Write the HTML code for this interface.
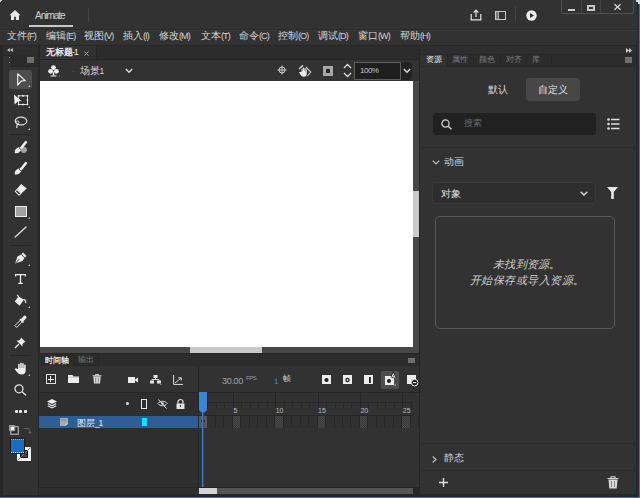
<!DOCTYPE html>
<html><head><meta charset="utf-8">
<style>
*{margin:0;padding:0;box-sizing:border-box}
html,body{width:640px;height:498px;overflow:hidden;background:#323232;font-family:"Liberation Sans",sans-serif;color:#d4d4d4;position:relative}
.a{position:absolute}
.t{position:absolute;white-space:nowrap;line-height:1}
.m{position:absolute;white-space:nowrap;line-height:1;font-size:10px;top:31px;color:#d8d8d8}
.m i{font-style:normal;font-size:9px;letter-spacing:-0.9px}
svg{position:absolute;overflow:visible}
.tri{position:absolute;width:0;height:0;border-left:2px solid transparent;border-bottom:2px solid #bdbdbd;border-right:0;width:2px;height:2px}
.dv{left:10px;width:21px;height:1px;background:repeating-linear-gradient(90deg,#1f1f1f 0 1px,#2a2a2a 1px 2px)}
</style></head><body>
<!-- title bar -->
<div class="a" style="left:0;top:0;width:640px;height:29px;background:#323232"></div>
<div class="a" style="left:0;top:29px;width:640px;height:1px;background:#2b2b2b"></div>
<div class="a" style="left:0;top:30px;width:640px;height:1px;background:#3a3a3a"></div>
<!-- home icon -->
<svg style="left:9px;top:10px" width="12" height="10" viewBox="0 0 12 10"><path d="M6 0 L11.5 5.2 L10 5.2 L10 10 L6.9 10 L6.9 6.8 L5.1 6.8 L5.1 10 L2 10 L2 5.2 L0.5 5.2 Z" fill="#e6e6e6"/></svg>
<div class="t" style="left:35px;top:11px;font-size:10px;letter-spacing:-1px;color:#d0d0d0">Animate</div>
<div class="a" style="left:29px;top:25px;width:44px;height:2px;background:#c8c8c8"></div>
<div class="a" style="left:88px;top:8px;width:1px;height:14px;background:#444"></div>
<!-- share icon -->
<svg style="left:470px;top:9px" width="12" height="12" viewBox="0 0 12 12"><path d="M1.2 5 V10.8 H10.8 V5" fill="none" stroke="#e4e4e4" stroke-width="1.2"/><path d="M6 8 V1.2 M3.6 3.6 L6 1.2 L8.4 3.6" fill="none" stroke="#e4e4e4" stroke-width="1.2"/></svg>
<!-- panel icon -->
<svg style="left:495px;top:11px" width="11" height="9" viewBox="0 0 11 9"><rect x="0.5" y="0.5" width="10" height="8" fill="none" stroke="#c8c8c8" stroke-width="1"/><rect x="1" y="1" width="2" height="7" fill="#777"/><path d="M3.5 1 V8" stroke="#c8c8c8" stroke-width="0.8"/></svg>
<div class="a" style="left:515px;top:6px;width:1px;height:15px;background:#444"></div>
<!-- play -->
<svg style="left:526px;top:10px" width="11" height="11" viewBox="0 0 11 11"><circle cx="5.5" cy="5.5" r="5.2" fill="#ececec"/><path d="M4 3 L8 5.5 L4 8 Z" fill="#323232"/></svg>
<!-- window controls -->
<div class="a" style="left:561px;top:-2px;width:73px;height:16px;border:1px solid #505050;border-radius:2px"></div>
<div class="a" style="left:581px;top:0;width:1px;height:13px;background:#444"></div>
<div class="a" style="left:600px;top:0;width:1px;height:13px;background:#444"></div>
<div class="a" style="left:568px;top:8.5px;width:7px;height:2px;background:#d0d0d0"></div>
<div class="a" style="left:587px;top:5px;width:8px;height:6px;border:2px solid #c8c8c8"></div>
<svg style="left:614px;top:4px" width="7" height="6" viewBox="0 0 7 6"><path d="M0.5 0.3 L6.5 5.7 M6.5 0.3 L0.5 5.7" stroke="#d8d8d8" stroke-width="1.3"/></svg>
<!-- menu -->
<div class="m" style="left:7px">文件<i>(F)</i></div>
<div class="m" style="left:46px">编辑<i>(E)</i></div>
<div class="m" style="left:84px">视图<i>(V)</i></div>
<div class="m" style="left:123px">插入<i>(I)</i></div>
<div class="m" style="left:159px">修改<i>(M)</i></div>
<div class="m" style="left:201px">文本<i>(T)</i></div>
<div class="m" style="left:239px">命令<i>(C)</i></div>
<div class="m" style="left:278px">控制<i>(O)</i></div>
<div class="m" style="left:318px">调试<i>(D)</i></div>
<div class="m" style="left:358px">窗口<i>(W)</i></div>
<div class="m" style="left:400px">帮助<i>(H)</i></div>

<!-- left toolbar -->
<div class="a" style="left:0;top:45px;width:39px;height:453px;background:#262626"></div>
<div class="a" style="left:3px;top:45px;width:35px;height:450px;background:#323232"></div>
<div class="a" style="left:3px;top:45px;width:35px;height:10px;background:#2e2e2e"></div>
<div class="a" style="left:3px;top:55px;width:35px;height:1px;background:#262626"></div>
<svg style="left:7px;top:48px" width="6" height="4" viewBox="0 0 6 4"><path d="M3 0 L0 2 L3 4 Z M6 0 L3 2 L6 4 Z" fill="#bdbdbd"/></svg>
<div class="a" style="left:11px;top:55px;width:27px;height:12px;background:#2b2b2b;border-left:1px solid #262626;border-bottom:1px solid #262626"></div>
<div class="a" style="left:8.5px;top:56.5px;width:1.5px;height:1.5px;background:#5a86bb"></div>
<div class="a" style="left:8.5px;top:61.5px;width:1.5px;height:1.5px;background:#5a86bb"></div>
<div class="a" style="left:27px;top:57px;width:7px;height:6px;background:#6e6e6e;border-top:1px solid #7a7a7a"></div>
<div class="a" style="left:9px;top:70px;width:23px;height:19px;background:#4e4e4e;border-radius:3px"></div>
<!-- arrow -->
<svg style="left:17px;top:73px" width="9" height="13" viewBox="0 0 9 13"><path d="M0.7 0.8 L8.2 7.6 L4.3 8 L0.7 12.2 Z" fill="none" stroke="#ececec" stroke-width="1.2" stroke-linejoin="round"/></svg>
<div class="tri" style="left:28px;top:85px"></div>
<!-- free transform -->
<svg style="left:13px;top:94px" width="16" height="12" viewBox="0 0 16 12"><rect x="5.5" y="1.8" width="9" height="8.7" fill="none" stroke="#d8d8d8" stroke-width="1"/><g fill="#e8e8e8"><rect x="4.8" y="1" width="1.6" height="1.6"/><rect x="9.2" y="1" width="1.6" height="1.6"/><rect x="13.7" y="1" width="1.6" height="1.6"/><rect x="13.7" y="5.4" width="1.6" height="1.6"/><rect x="4.8" y="9.7" width="1.6" height="1.6"/><rect x="9.2" y="9.7" width="1.6" height="1.6"/><rect x="13.7" y="9.7" width="1.6" height="1.6"/></g><path d="M1 0.5 L8.5 7 L4.8 7.6 L1.6 10.6 Z" fill="#f0f0f0"/></svg>
<div class="tri" style="left:28px;top:106px"></div>
<!-- lasso -->
<svg style="left:14px;top:116px" width="14" height="13" viewBox="0 0 14 13"><ellipse cx="7" cy="5" rx="5.8" ry="3.8" fill="none" stroke="#dcdcdc" stroke-width="1.2"/><circle cx="3.5" cy="6.5" r="1.5" fill="none" stroke="#dcdcdc" stroke-width="1"/><path d="M3.5 8 L2.5 12" stroke="#dcdcdc" stroke-width="1.1"/></svg>
<div class="tri" style="left:28px;top:128px"></div>
<div class="a dv" style="top:134px"></div>
<!-- paint brush -->
<svg style="left:14px;top:141px" width="13" height="13" viewBox="0 0 13 13"><circle cx="9.8" cy="8.8" r="3.1" fill="#a0a0a0"/><path d="M11.8 1.2 L7.2 7" stroke="#ededed" stroke-width="2.6" stroke-linecap="round"/><ellipse cx="4" cy="9.3" rx="3.5" ry="2.3" transform="rotate(-40 4 9.3)" fill="#ededed"/><path d="M1 12 L3 10" stroke="#ededed" stroke-width="1.5"/><path d="M4.8 6.5 L7.6 9.2" stroke="#323232" stroke-width="0.9"/></svg>
<!-- brush -->
<svg style="left:14px;top:162px" width="13" height="13" viewBox="0 0 13 13"><path d="M11.8 1.2 L7.2 7" stroke="#ededed" stroke-width="2.6" stroke-linecap="round"/><ellipse cx="4" cy="9.5" rx="3.5" ry="2.3" transform="rotate(-40 4 9.5)" fill="#ededed"/><path d="M1 12.2 L3 10.2" stroke="#ededed" stroke-width="1.5"/><path d="M4.8 6.7 L7.6 9.4" stroke="#323232" stroke-width="0.9"/></svg>
<!-- eraser -->
<svg style="left:14px;top:183px" width="13" height="13" viewBox="0 0 13 13"><path d="M7.2 1 L12.7 5.6 L7.31 10.57 L2.79 6.11 Z" fill="#ededed"/><path d="M2.9 6.5 L7 10.4 L5 12.2 L1.3 8.3 Z" fill="#2a2a2a" stroke="#e6e6e6" stroke-width="1.1" stroke-linejoin="round"/></svg>
<!-- rectangle -->
<div class="a" style="left:15px;top:206px;width:12px;height:11px;background:#a2a2a2;border:1px solid #ececec"></div>
<div class="tri" style="left:28px;top:217px"></div>
<!-- line -->
<svg style="left:14px;top:226px" width="13" height="12" viewBox="0 0 13 12"><path d="M1.2 11 L12 1" stroke="#e0e0e0" stroke-width="1.3" stroke-linecap="round"/></svg>
<div class="a dv" style="top:245px"></div>
<!-- pen -->
<svg style="left:14px;top:252px" width="13" height="12" viewBox="0 0 13 12"><path d="M9 0.5 L12.5 4 L11 5.5 L7.5 2 Z" fill="#eeeeee"/><path d="M7 2.5 L10.5 6 L8.5 9 L1 11.5 L3.5 4.5 Z" fill="#eeeeee"/><path d="M1.5 11 L5.5 7" stroke="#323232" stroke-width="1"/></svg>
<div class="tri" style="left:28px;top:264px"></div>
<!-- text T -->
<svg style="left:15px;top:274px" width="11" height="10" viewBox="0 0 11 10"><path d="M0.6 2.6 V0.6 H10.4 V2.6 M5.5 0.6 V9.4 M3.3 9.4 H7.7" fill="none" stroke="#ededed" stroke-width="1.3"/></svg>
<!-- bucket -->
<svg style="left:14px;top:294px" width="13" height="13" viewBox="0 0 13 13"><path d="M4.4 2.4 L10 5.6 L5.6 11.7 L0.8 7.6 Z" fill="#ededed"/><path d="M3.2 0.8 L5 3.3" stroke="#e0e0e0" stroke-width="1.2"/><path d="M10 5.4 C11.4 6 12 7.5 11.8 9.3" fill="none" stroke="#d8d8d8" stroke-width="1.2"/></svg>
<div class="tri" style="left:28px;top:306px"></div>
<!-- eyedropper -->
<svg style="left:14px;top:315px" width="13" height="13" viewBox="0 0 13 13"><path d="M0.9 10.6 L6.6 4.9 L8.4 6.7 L2.7 12.4 Z" fill="none" stroke="#e6e6e6" stroke-width="1" stroke-linejoin="round"/><path d="M6 4 L9.5 7.5" stroke="#ededed" stroke-width="1.6"/><path d="M8.6 4.6 L10.8 2.4" stroke="#ededed" stroke-width="3.4" stroke-linecap="round"/></svg>
<!-- pin -->
<svg style="left:14px;top:337px" width="12" height="12" viewBox="0 0 12 12"><path d="M7 0.5 L11.5 5 L10 5.5 L8.5 7 L8.5 9.5 L2.5 3.5 L5 3.5 L6.5 2 Z" fill="#eeeeee"/><path d="M5 7 L1 11" stroke="#eeeeee" stroke-width="1.2"/></svg>
<div class="a dv" style="top:355px"></div>
<!-- hand -->
<svg style="left:14px;top:362px" width="13" height="13" viewBox="0 0 11 13" preserveAspectRatio="none"><path d="M3.5 7 L3.5 2.2 C3.5 1.5 4.8 1.5 4.8 2.2 L4.8 6 L5.2 6 L5.2 1 C5.2 0.3 6.5 0.3 6.5 1 L6.5 6 L6.9 6 L6.9 1.5 C6.9 0.8 8.2 0.8 8.2 1.5 L8.2 6.2 L8.6 6.2 L8.6 3 C8.6 2.3 9.9 2.3 9.9 3 L9.9 8.5 C9.9 11 8.5 12.5 6.5 12.5 C4.5 12.5 3.5 11.5 2.5 10 L0.8 7.5 C0.3 6.8 1.2 6 2 6.6 Z" fill="#eeeeee"/></svg>
<div class="tri" style="left:28px;top:374px"></div>
<!-- zoom -->
<svg style="left:14px;top:384px" width="13" height="12" viewBox="0 0 13 12"><circle cx="5" cy="4.8" r="4" fill="none" stroke="#e0e0e0" stroke-width="1.3"/><path d="M8 7.8 L12 11.2" stroke="#e0e0e0" stroke-width="1.5"/></svg>
<!-- dots -->
<div class="a" style="left:15px;top:410px;width:3px;height:3px;background:#eee;border-radius:1px"></div>
<div class="a" style="left:19px;top:410px;width:3px;height:3px;background:#eee;border-radius:1px"></div>
<div class="a" style="left:24px;top:410px;width:3px;height:3px;background:#eee;border-radius:1px"></div>
<!-- default colors -->
<svg style="left:9px;top:425px" width="10" height="10" viewBox="0 0 10 10"><rect x="1.8" y="1.8" width="7.4" height="7.4" fill="#262626" stroke="#cfcfcf" stroke-width="1"/><rect x="0.5" y="0.5" width="5.2" height="5.2" fill="none" stroke="#9a9a9a" stroke-width="1"/><rect x="2" y="2" width="3.2" height="3.2" fill="#ffffff"/></svg>
<svg style="left:23px;top:427px" width="8" height="7" viewBox="0 0 8 7"><path d="M0.5 1.5 H5 C6.5 1.5 7 3 7 6.5 M5.5 5 L7 6.5 L8 5" fill="none" stroke="#5e5e5e" stroke-width="1.1"/></svg>
<!-- stroke/fill swatches -->
<div class="a" style="left:17px;top:447px;width:14px;height:14px;background:#f4f4f4"></div>
<div class="a" style="left:20px;top:450px;width:8px;height:8px;background:#444;border:1px solid #111"></div>
<svg style="left:17px;top:447px" width="14" height="14" viewBox="0 0 14 14"><path d="M0.5 13.5 L13.5 0.5" stroke="#b8682c" stroke-width="1"/></svg>
<div class="a" style="left:10px;top:438px;width:15px;height:16px;background:#1c1c1c"></div>
<div class="a" style="left:11px;top:439px;width:13px;height:14px;background:#1c6cc0;border-bottom:1px dotted #e8e8e8;border-top:1px dotted #8fb3dc"></div>
<!-- doc area -->
<div class="a" style="left:38px;top:45px;width:382px;height:308px;background:#262626"></div>
<div class="a" style="left:40px;top:45px;width:379px;height:14px;background:#2c2c2c"></div>
<div class="a" style="left:40px;top:45px;width:56px;height:14px;background:#323232"></div>
<div class="a" style="left:96px;top:45px;width:1px;height:14px;background:#262626"></div>
<div class="t" style="left:46px;top:48px;font-size:8.5px;font-weight:bold;color:#f0f0f0">无标题<span style="font-weight:normal;font-size:9px;letter-spacing:-1.2px;margin-left:-1px">-1</span></div>
<svg style="left:84px;top:51px" width="5" height="5" viewBox="0 0 5 5"><path d="M0.3 0.3 L4.7 4.7 M4.7 0.3 L0.3 4.7" stroke="#a8a8a8" stroke-width="0.9"/></svg>
<div class="a" style="left:40px;top:59px;width:379px;height:1px;background:#262626"></div>
<div class="a" style="left:40px;top:60px;width:379px;height:21px;background:#323232"></div>
<!-- club icon -->
<svg style="left:48px;top:65px" width="13" height="12" viewBox="0 0 13 12"><circle cx="5.5" cy="2.6" r="2.4" fill="#f0f0f0"/><circle cx="2.6" cy="6.3" r="2.4" fill="#f0f0f0"/><circle cx="8.4" cy="6.3" r="2.4" fill="#f0f0f0"/><path d="M5.5 5 L6.5 10.5 L4.5 10.5 Z" fill="#f0f0f0"/><path d="M2.5 11 H8.5" stroke="#f0f0f0" stroke-width="1"/><rect x="11" y="10.5" width="1" height="1" fill="#9a9a9a"/></svg>
<div class="a" style="left:73px;top:71px;width:1px;height:1px;background:#555"></div>
<div class="t" style="left:80px;top:66px;font-size:9.5px;color:#d8d8d8">场景<span style="font-size:8.5px;margin-left:-0.5px">1</span></div>
<svg style="left:125px;top:68px" width="8" height="6" viewBox="0 0 8 6"><path d="M0.8 1 L4 4.3 L7.2 1" fill="none" stroke="#dcdcdc" stroke-width="1.4"/></svg>
<!-- crosshair -->
<svg style="left:277px;top:65px" width="11" height="11" viewBox="0 0 11 11"><circle cx="5" cy="5" r="3" fill="none" stroke="#cfcfcf" stroke-width="1"/><path d="M5 0.5 V9.5 M0.5 5 H9.5" stroke="#cfcfcf" stroke-width="1"/></svg>
<!-- rotate hand -->
<svg style="left:298px;top:64px" width="14" height="13" viewBox="0 0 14 13"><path d="M1.5 4.5 L4.5 1.8" stroke="#d0d0d0" stroke-width="1.6" stroke-linecap="round"/><path d="M7.8 3 L12.8 8 L9.5 11.8" fill="none" stroke="#c8c8c8" stroke-width="1.1"/><path d="M3.5 8 L3.5 5 C3.5 4.3 4.6 4.3 4.6 5 L4.6 7 L5 7 L5 4 C5 3.3 6.1 3.3 6.1 4 L6.1 7 L6.4 7 L6.4 4.5 C6.4 3.8 7.5 3.8 7.5 4.5 L7.5 7.5 L7.8 7.5 L7.8 6 C7.8 5.4 8.8 5.4 8.8 6 L8.8 9.5 C8.8 11.5 7.8 12.8 6 12.8 C4.5 12.8 3.5 12 2.7 11 L1.2 8.8 C0.8 8.2 1.6 7.6 2.2 8.1 Z" fill="#e8e8e8"/></svg>
<!-- clip -->
<div class="a" style="left:323px;top:66px;width:10px;height:10px;border:3px solid #a8a8a8;background:#2a2a2a"></div>
<!-- up/down -->
<svg style="left:343px;top:63px" width="9" height="15" viewBox="0 0 9 15"><path d="M1 5 L4.5 1.5 L8 5 M1 10 L4.5 13.5 L8 10" fill="none" stroke="#dcdcdc" stroke-width="1.3"/></svg>
<div class="a" style="left:354px;top:62px;width:58px;height:18px;background:#222222;border-radius:0 4px 4px 0"></div>
<div class="a" style="left:354px;top:62px;width:47px;height:18px;background:#1e1e1e;border:1px solid #5c5c5c"></div>
<div class="t" style="left:360px;top:67px;font-size:8px;letter-spacing:-0.5px;color:#c8c8c8">100%</div>
<svg style="left:403px;top:68px" width="8" height="6" viewBox="0 0 8 6"><path d="M0.8 1 L4 4.3 L7.2 1" fill="none" stroke="#dcdcdc" stroke-width="1.4"/></svg>
<div class="a" style="left:40px;top:81px;width:373px;height:266px;background:#ffffff"></div>
<div class="a" style="left:413px;top:81px;width:6px;height:272px;background:#474747"></div>
<div class="a" style="left:40px;top:347px;width:373px;height:6px;background:#474747"></div>
<div class="a" style="left:190px;top:347px;width:72px;height:6px;background:#cacaca"></div>
<div class="a" style="left:413px;top:191px;width:6px;height:46px;background:#cacaca"></div>
<!-- timeline -->
<div class="a" style="left:38px;top:353px;width:382px;height:145px;background:#262626"></div>
<div class="a" style="left:39px;top:354px;width:380px;height:12px;background:#2c2c2c"></div>
<div class="t" style="left:45px;top:356.5px;font-size:7.6px;font-weight:bold;color:#e8e8e8">时间轴</div>
<div class="a" style="left:73px;top:354px;width:26px;height:12px;border:1px solid #262626;border-top:0;background:#2b2b2b"></div>
<div class="t" style="left:78px;top:356px;font-size:8px;color:#7a7a7a">输出</div>
<div class="a" style="left:408px;top:358px;width:7px;height:5px;background:#6e6e6e;border-top:1px solid #7a7a7a"></div>
<div class="a" style="left:39px;top:366px;width:380px;height:26px;background:#323232"></div>
<!-- new layer -->
<div class="a" style="left:46px;top:374px;width:10px;height:10px;border:1.2px solid #e0e0e0"></div>
<div class="a" style="left:50px;top:376px;width:1px;height:6px;background:#f0f0f0"></div><div class="a" style="left:48px;top:378.5px;width:6px;height:1px;background:#f0f0f0"></div>
<!-- folder -->
<svg style="left:68px;top:375px" width="12" height="9" viewBox="0 0 12 9"><path d="M0 0 H4.5 L5.5 1.5 H11 V8 H0 Z" fill="#ececec"/><path d="M0 2.2 H11" stroke="#9a9a9a" stroke-width="0.5"/></svg>
<!-- trash -->
<svg style="left:92px;top:374px" width="10" height="10" viewBox="0 0 10 10"><path d="M0.5 1.8 H9.5 M3.5 1.8 V0.6 H6.5 V1.8" fill="none" stroke="#dcdcdc" stroke-width="1"/><path d="M1.3 2.5 H8.7 L8 9.5 H2 Z" fill="#dcdcdc"/><path d="M3.7 3.5 V8.5 M6.3 3.5 V8.5" stroke="#6a6a6a" stroke-width="0.8"/></svg>
<!-- camera -->
<svg style="left:128px;top:377px" width="10" height="6" viewBox="0 0 10 6"><rect x="0" y="0" width="7" height="6" fill="#ececec"/><path d="M6.5 3 L10 0.5 V5.5 Z" fill="#ececec"/></svg>
<!-- parenting -->
<svg style="left:150px;top:375px" width="12" height="10" viewBox="0 0 12 10"><rect x="3.5" y="0" width="4" height="3" fill="#e4e4e4"/><rect x="0" y="5.5" width="4" height="3" fill="#e4e4e4"/><rect x="7" y="5.5" width="4" height="3" fill="#e4e4e4"/><path d="M5.5 3 V4.5 M2 5.5 V4.5 H9 V5.5" fill="none" stroke="#e4e4e4" stroke-width="0.9"/><rect x="10.5" y="9" width="1" height="1" fill="#bbb"/></svg>
<!-- graph -->
<svg style="left:173px;top:375px" width="10" height="10" viewBox="0 0 10 10"><path d="M0.6 0 V9.4 H10" fill="none" stroke="#dcdcdc" stroke-width="1"/><path d="M2 8 L8 3 M5.5 2.8 H8.3 V5.5" fill="none" stroke="#dcdcdc" stroke-width="1"/></svg>
<!-- fps -->
<div class="t" style="left:222px;top:377px;font-size:9px;letter-spacing:-0.3px;color:#9aa6b8">30.00</div>
<div class="t" style="left:246px;top:375px;font-size:6px;letter-spacing:-0.5px;color:#9a9a9a">FPS</div>
<div class="t" style="left:274px;top:377.5px;font-size:8px;color:#3d8ee6">1</div>
<div class="t" style="left:282.5px;top:374.5px;font-size:8px;color:#cfcfcf">帧</div>
<!-- frame controls -->
<svg style="left:322px;top:375px" width="9" height="9" viewBox="0 0 9 9"><rect width="9" height="9" fill="#ececec"/><circle cx="4.5" cy="5" r="2.1" fill="#1e1e1e"/></svg>
<svg style="left:343px;top:375px" width="9" height="9" viewBox="0 0 9 9"><rect width="9" height="9" fill="#ececec"/><circle cx="4.5" cy="5" r="2.2" fill="#1e1e1e"/><circle cx="4.5" cy="5" r="0.9" fill="#ececec"/></svg>
<svg style="left:364px;top:375px" width="9" height="9" viewBox="0 0 9 9"><rect width="9" height="9" fill="#ececec"/><rect x="5" y="2" width="1.8" height="6" fill="#1e1e1e"/></svg>
<div class="a" style="left:381px;top:371px;width:18px;height:18px;background:#4e4e4e;border-radius:2px"></div>
<svg style="left:385px;top:373px" width="11" height="13" viewBox="0 0 11 13"><rect x="0" y="3" width="9" height="9" fill="#ececec"/><circle cx="4" cy="8" r="2" fill="#1e1e1e"/><path d="M6.5 5 L8.3 0.6 L10.1 5 M7.2 3.4 H9.4" fill="none" stroke="#1e1e1e" stroke-width="2.2"/><path d="M6.5 5 L8.3 0.6 L10.1 5 M7.2 3.4 H9.4" fill="none" stroke="#ececec" stroke-width="0.9"/><rect x="9.5" y="11.5" width="1.2" height="1.2" fill="#ddd"/></svg>
<svg style="left:407px;top:375px" width="11" height="11" viewBox="0 0 11 11"><rect width="9" height="9" fill="#ececec"/><circle cx="7.6" cy="7.6" r="3.3" fill="#1e1e1e" stroke="#ececec" stroke-width="1"/><path d="M6 7.6 H9.2" stroke="#ececec" stroke-width="1.1"/></svg>
<div class="a" style="left:39px;top:392px;width:380px;height:1px;background:#262626"></div>
<!-- layers panel -->
<div class="a" style="left:39px;top:393px;width:159px;height:95px;background:#2e2e2e"></div>
<div class="a" style="left:198px;top:366px;width:1px;height:122px;background:#262626"></div>
<div class="a" style="left:199px;top:393px;width:220px;height:95px;background:#323232"></div>
<svg style="left:47px;top:399px" width="10" height="10" viewBox="0 0 10 10"><path d="M5 0 L10 2.5 L5 5 L0 2.5 Z" fill="#ececec"/><path d="M0.8 4.6 L5 6.8 L9.2 4.6 M0.8 6.8 L5 9 L9.2 6.8" fill="none" stroke="#ececec" stroke-width="1.1"/></svg>
<div class="a" style="left:126px;top:402px;width:3px;height:3px;background:#e0e0e0;border-radius:50%"></div>
<div class="a" style="left:141px;top:399px;width:6px;height:10px;border:1.2px solid #e6e6e6"></div>
<svg style="left:157px;top:399px" width="11" height="10" viewBox="0 0 11 10"><path d="M0.8 4.5 C3 1.5 8 1.5 10.2 4.5 C8 7.5 3 7.5 0.8 4.5 Z" fill="none" stroke="#dcdcdc" stroke-width="1"/><circle cx="5.5" cy="4.5" r="1.3" fill="#dcdcdc"/><path d="M1.5 0.5 L9.5 9.5" stroke="#dcdcdc" stroke-width="1"/></svg>
<svg style="left:176px;top:399px" width="9" height="10" viewBox="0 0 9 10"><path d="M2 4.5 V3 A2.5 2.5 0 0 1 7 3 V4.5" fill="none" stroke="#e4e4e4" stroke-width="1.2"/><rect x="0.5" y="4.5" width="8" height="5.5" fill="#e4e4e4"/><rect x="4" y="6" width="1" height="2" fill="#323232"/></svg>
<!-- ruler upper row line -->
<div class="a" style="left:199px;top:402px;width:214px;height:1px;background:#262626"></div>
<div class="a" style="left:199px;top:415px;width:214px;height:1px;background:#262626"></div>
<!-- layer row -->
<div class="a" style="left:39px;top:416px;width:159px;height:12px;background:#2f5e96"></div>
<svg style="left:60px;top:418px" width="8" height="8" viewBox="0 0 8 8"><path d="M0 0 H8 V5.5 L5.5 8 H0 Z" fill="#a8a8a8"/><path d="M5.5 8 V5.5 H8 Z" fill="#e0e0e0"/><rect x="1.5" y="1.5" width="5" height="1" fill="#8a8a8a"/></svg>
<div class="t" style="left:77px;top:418.5px;font-size:8.5px;color:#e8eef6">图层<span style="letter-spacing:-1.2px">_1</span></div>
<div class="a" style="left:142px;top:418px;width:5px;height:8px;background:#00e8ff"></div>
<div class="a" style="left:199px;top:416px;width:214px;height:12px;background:#303030"></div>
<div class="a" style="left:206.47px;top:416px;width:1px;height:12px;background:#262626"></div>
<div class="a" style="left:199.00px;top:403px;width:1px;height:6px;background:#262626"></div>
<div class="a" style="left:214.94px;top:416px;width:1px;height:12px;background:#262626"></div>
<div class="a" style="left:207.47px;top:403px;width:1px;height:6px;background:#262626"></div>
<div class="a" style="left:223.41px;top:416px;width:1px;height:12px;background:#262626"></div>
<div class="a" style="left:215.94px;top:403px;width:1px;height:6px;background:#262626"></div>
<div class="a" style="left:231.88px;top:416px;width:1px;height:12px;background:#262626"></div>
<div class="a" style="left:224.41px;top:403px;width:1px;height:6px;background:#262626"></div>
<div class="a" style="left:232.88px;top:416px;width:7.47px;height:12px;background:repeating-conic-gradient(#4a4a4a 0 25%,#383838 0 50%) 0 0/2px 2px"></div>
<div class="a" style="left:240.35px;top:416px;width:1px;height:12px;background:#262626"></div>
<div class="a" style="left:232.88px;top:403px;width:1px;height:6px;background:#262626"></div>
<div class="a" style="left:232.88px;top:392px;width:1px;height:11px;background:#262626"></div>
<div class="t" style="left:233.38px;top:407px;font-size:7px;color:#bdbdbd">5</div>
<div class="a" style="left:248.82px;top:416px;width:1px;height:12px;background:#262626"></div>
<div class="a" style="left:241.35px;top:403px;width:1px;height:6px;background:#262626"></div>
<div class="a" style="left:257.29px;top:416px;width:1px;height:12px;background:#262626"></div>
<div class="a" style="left:249.82px;top:403px;width:1px;height:6px;background:#262626"></div>
<div class="a" style="left:265.76px;top:416px;width:1px;height:12px;background:#262626"></div>
<div class="a" style="left:258.29px;top:403px;width:1px;height:6px;background:#262626"></div>
<div class="a" style="left:274.23px;top:416px;width:1px;height:12px;background:#262626"></div>
<div class="a" style="left:266.76px;top:403px;width:1px;height:6px;background:#262626"></div>
<div class="a" style="left:275.23px;top:416px;width:7.47px;height:12px;background:repeating-conic-gradient(#4a4a4a 0 25%,#383838 0 50%) 0 0/2px 2px"></div>
<div class="a" style="left:282.70px;top:416px;width:1px;height:12px;background:#262626"></div>
<div class="a" style="left:275.23px;top:403px;width:1px;height:6px;background:#262626"></div>
<div class="a" style="left:275.23px;top:392px;width:1px;height:11px;background:#262626"></div>
<div class="t" style="left:275.73px;top:407px;font-size:7px;color:#bdbdbd">10</div>
<div class="a" style="left:291.17px;top:416px;width:1px;height:12px;background:#262626"></div>
<div class="a" style="left:283.70px;top:403px;width:1px;height:6px;background:#262626"></div>
<div class="a" style="left:299.64px;top:416px;width:1px;height:12px;background:#262626"></div>
<div class="a" style="left:292.17px;top:403px;width:1px;height:6px;background:#262626"></div>
<div class="a" style="left:308.11px;top:416px;width:1px;height:12px;background:#262626"></div>
<div class="a" style="left:300.64px;top:403px;width:1px;height:6px;background:#262626"></div>
<div class="a" style="left:316.58px;top:416px;width:1px;height:12px;background:#262626"></div>
<div class="a" style="left:309.11px;top:403px;width:1px;height:6px;background:#262626"></div>
<div class="a" style="left:317.58px;top:416px;width:7.47px;height:12px;background:repeating-conic-gradient(#4a4a4a 0 25%,#383838 0 50%) 0 0/2px 2px"></div>
<div class="a" style="left:325.05px;top:416px;width:1px;height:12px;background:#262626"></div>
<div class="a" style="left:317.58px;top:403px;width:1px;height:6px;background:#262626"></div>
<div class="a" style="left:317.58px;top:392px;width:1px;height:11px;background:#262626"></div>
<div class="t" style="left:318.08px;top:407px;font-size:7px;color:#bdbdbd">15</div>
<div class="a" style="left:333.52px;top:416px;width:1px;height:12px;background:#262626"></div>
<div class="a" style="left:326.05px;top:403px;width:1px;height:6px;background:#262626"></div>
<div class="a" style="left:341.99px;top:416px;width:1px;height:12px;background:#262626"></div>
<div class="a" style="left:334.52px;top:403px;width:1px;height:6px;background:#262626"></div>
<div class="a" style="left:350.46px;top:416px;width:1px;height:12px;background:#262626"></div>
<div class="a" style="left:342.99px;top:403px;width:1px;height:6px;background:#262626"></div>
<div class="a" style="left:358.93px;top:416px;width:1px;height:12px;background:#262626"></div>
<div class="a" style="left:351.46px;top:403px;width:1px;height:6px;background:#262626"></div>
<div class="a" style="left:359.93px;top:416px;width:7.47px;height:12px;background:repeating-conic-gradient(#4a4a4a 0 25%,#383838 0 50%) 0 0/2px 2px"></div>
<div class="a" style="left:367.40px;top:416px;width:1px;height:12px;background:#262626"></div>
<div class="a" style="left:359.93px;top:403px;width:1px;height:6px;background:#262626"></div>
<div class="a" style="left:359.93px;top:392px;width:1px;height:11px;background:#262626"></div>
<div class="t" style="left:360.43px;top:407px;font-size:7px;color:#bdbdbd">20</div>
<div class="a" style="left:375.87px;top:416px;width:1px;height:12px;background:#262626"></div>
<div class="a" style="left:368.40px;top:403px;width:1px;height:6px;background:#262626"></div>
<div class="a" style="left:384.34px;top:416px;width:1px;height:12px;background:#262626"></div>
<div class="a" style="left:376.87px;top:403px;width:1px;height:6px;background:#262626"></div>
<div class="a" style="left:392.81px;top:416px;width:1px;height:12px;background:#262626"></div>
<div class="a" style="left:385.34px;top:403px;width:1px;height:6px;background:#262626"></div>
<div class="a" style="left:401.28px;top:416px;width:1px;height:12px;background:#262626"></div>
<div class="a" style="left:393.81px;top:403px;width:1px;height:6px;background:#262626"></div>
<div class="a" style="left:402.28px;top:416px;width:7.47px;height:12px;background:repeating-conic-gradient(#4a4a4a 0 25%,#383838 0 50%) 0 0/2px 2px"></div>
<div class="a" style="left:409.75px;top:416px;width:1px;height:12px;background:#262626"></div>
<div class="a" style="left:402.28px;top:403px;width:1px;height:6px;background:#262626"></div>
<div class="a" style="left:402.28px;top:392px;width:1px;height:11px;background:#262626"></div>
<div class="t" style="left:402.78px;top:407px;font-size:7px;color:#bdbdbd">25</div>
<div class="a" style="left:418.22px;top:416px;width:1px;height:12px;background:#262626"></div>
<div class="a" style="left:410.75px;top:403px;width:1px;height:6px;background:#262626"></div>
<div class="a" style="left:199px;top:416px;width:8px;height:12px;background:#5a5a5a"></div>
<div class="a" style="left:201px;top:419px;width:4px;height:4px;border:1px solid #2a2a2a;border-radius:50%"></div>
<!-- playhead -->
<svg style="left:199px;top:392px" width="8" height="24" viewBox="0 0 8 24"><path d="M0 0 H8 V18 L4 22 L0 18 Z" fill="#3b84d8"/></svg>
<div class="a" style="left:202px;top:412px;width:1px;height:76px;background:#3f7fcc"></div><div class="a" style="left:203px;top:412px;width:1px;height:76px;background:#2f4d70"></div>
<!-- scrollbar -->
<div class="a" style="left:39px;top:487px;width:380px;height:1px;background:#262626"></div>
<div class="a" style="left:39px;top:488px;width:160px;height:6px;background:#2e2e2e"></div>
<div class="a" style="left:199px;top:488px;width:214px;height:6px;background:#555555"></div>
<div class="a" style="left:199px;top:488px;width:18px;height:6px;background:#d4d4d4"></div>
<!-- right panel -->
<div class="a" style="left:419px;top:45px;width:221px;height:453px;background:#262626"></div>
<div class="a" style="left:420px;top:45px;width:216px;height:449px;background:#323232"></div>
<div class="a" style="left:420px;top:45px;width:216px;height:9px;background:#2e2e2e"></div>
<svg style="left:626px;top:48px" width="6" height="5" viewBox="0 0 6 5"><path d="M0 0 L3 2.5 L0 5 Z M3 0 L6 2.5 L3 5 Z" fill="#d0d0d0"/></svg>
<div class="a" style="left:420px;top:54px;width:216px;height:1px;background:#282828"></div>
<div class="a" style="left:420px;top:55px;width:216px;height:11px;background:#2c2c2c"></div>
<div class="a" style="left:420px;top:55px;width:27px;height:11px;background:#323232"></div>
<div class="a" style="left:447px;top:55px;width:1px;height:11px;background:#262626"></div>
<div class="a" style="left:473px;top:55px;width:1px;height:11px;background:#262626"></div>
<div class="a" style="left:500px;top:55px;width:1px;height:11px;background:#262626"></div>
<div class="a" style="left:526px;top:55px;width:1px;height:11px;background:#262626"></div>
<div class="a" style="left:551px;top:55px;width:1px;height:11px;background:#262626"></div>
<div class="t" style="left:425.5px;top:56px;font-size:8px;color:#f4f4f4">资源</div>
<div class="t" style="left:452px;top:56px;font-size:8px;color:#7c7c7c">属性</div>
<div class="t" style="left:479px;top:56px;font-size:8px;color:#7c7c7c">颜色</div>
<div class="t" style="left:506px;top:56px;font-size:8px;color:#7c7c7c">对齐</div>
<div class="t" style="left:532px;top:56px;font-size:8px;color:#7c7c7c">库</div>
<div class="a" style="left:625px;top:57px;width:7px;height:6px;background:#6e6e6e;border-top:1px solid #7a7a7a"></div>
<div class="a" style="left:420px;top:66px;width:216px;height:1px;background:#2a2a2a"></div>
<!-- segmented -->
<div class="t" style="left:488px;top:85px;font-size:10px;color:#d4d4d4">默认</div>
<div class="a" style="left:526px;top:78px;width:54px;height:23px;background:#474747;border-radius:4px"></div>
<div class="t" style="left:538px;top:85px;font-size:10px;color:#e4e4e4">自定义</div>
<!-- search -->
<div class="a" style="left:433px;top:113px;width:163px;height:22px;background:#212121;border-radius:3px"></div>
<svg style="left:441px;top:119px" width="12" height="11" viewBox="0 0 12 11"><circle cx="4.5" cy="4.5" r="3.6" fill="none" stroke="#d0d0d0" stroke-width="1.3"/><path d="M7.2 7.2 L10.5 10.3" stroke="#d0d0d0" stroke-width="1.5"/></svg>
<div class="t" style="left:464px;top:119px;font-size:9px;color:#6a6a6a">搜索</div>
<svg style="left:607px;top:118px" width="13" height="12" viewBox="0 0 13 12"><circle cx="1.5" cy="1.5" r="1.3" fill="#e0e0e0"/><circle cx="1.5" cy="6" r="1.3" fill="#e0e0e0"/><circle cx="1.5" cy="10.5" r="1.3" fill="#e0e0e0"/><path d="M4 1.5 H12.5 M4 6 H12.5 M4 10.5 H12.5" stroke="#e0e0e0" stroke-width="1.4"/></svg>
<div class="a" style="left:420px;top:147px;width:216px;height:1px;background:#2a2a2a"></div>
<!-- animation section -->
<svg style="left:432px;top:160px" width="8" height="5" viewBox="0 0 8 5"><path d="M0.7 0.7 L4 4 L7.3 0.7" fill="none" stroke="#bdbdbd" stroke-width="1.2"/></svg>
<div class="t" style="left:444px;top:157px;font-size:10px;color:#d4d4d4">动画</div>
<div class="a" style="left:432px;top:182px;width:164px;height:22px;background:#2e2e2e;border:1px solid #3a3a3a;border-radius:3px"></div>
<div class="t" style="left:441px;top:189px;font-size:10px;color:#e0e0e0">对象</div>
<svg style="left:580px;top:191px" width="8" height="5" viewBox="0 0 8 5"><path d="M0.7 0.7 L4 4 L7.3 0.7" fill="none" stroke="#dcdcdc" stroke-width="1.3"/></svg>
<svg style="left:607px;top:187px" width="11" height="12" viewBox="0 0 11 12"><path d="M0 0 H11 L6.8 5 V12 H4.2 V5 Z" fill="#e6e6e6"/></svg>
<!-- empty box -->
<div class="a" style="left:435px;top:216px;width:180px;height:113px;border:1px solid #5a5a5a;border-radius:5px"></div>
<div class="t" style="left:493px;top:259px;font-size:11px;letter-spacing:0.25px;font-style:italic;color:#cfcfcf">未找到资源。</div>
<div class="t" style="left:470px;top:275px;font-size:11px;letter-spacing:0.45px;font-style:italic;color:#cfcfcf">开始保存或导入资源。</div>
<!-- static -->
<div class="a" style="left:420px;top:443px;width:216px;height:1px;background:#2a2a2a"></div>
<svg style="left:432px;top:456px" width="5" height="7" viewBox="0 0 5 7"><path d="M0.7 0.5 L4 3.5 L0.7 6.5" fill="none" stroke="#bdbdbd" stroke-width="1.2"/></svg>
<div class="t" style="left:444px;top:453px;font-size:10px;color:#d4d4d4">静态</div>
<div class="a" style="left:420px;top:470px;width:216px;height:1px;background:#2a2a2a"></div>
<svg style="left:439px;top:478px" width="9" height="9" viewBox="0 0 9 9"><path d="M4.5 0 V9 M0 4.5 H9" stroke="#e0e0e0" stroke-width="1.4"/></svg>
<svg style="left:607px;top:476px" width="12" height="13" viewBox="0 0 12 13"><path d="M0.5 2.5 H11.5 M4 2.5 V0.8 H8 V2.5" fill="none" stroke="#d8d8d8" stroke-width="1.1"/><path d="M1.5 3.5 H10.5 L9.7 12.5 H2.3 Z" fill="#d8d8d8"/><path d="M4.5 5 V11 M7.5 5 V11" stroke="#777" stroke-width="0.9"/></svg>
<div class="a" style="left:0;top:45px;width:640px;height:1px;background:#262626"></div>
<div class="a" style="left:0;top:497px;width:640px;height:1px;background:#1e78d0"></div>
<div class="a" style="left:639px;top:4px;width:1px;height:494px;background:#1e78d0"></div>
<div class="a" style="left:637px;top:2px;width:2px;height:495px;background:#2a2a2a"></div>
<div class="a" style="left:636px;top:0;width:4px;height:2px;background:#dcdcdc;border-radius:0 2px 0 0"></div>
<div class="a" style="left:638px;top:0;width:2px;height:4px;background:#dcdcdc"></div>
<div class="a" style="left:0;top:0;width:2px;height:1px;background:#cfcfcf"></div>
<div class="a" style="left:0;top:0;width:1px;height:2px;background:#cfcfcf"></div>
</body></html>
